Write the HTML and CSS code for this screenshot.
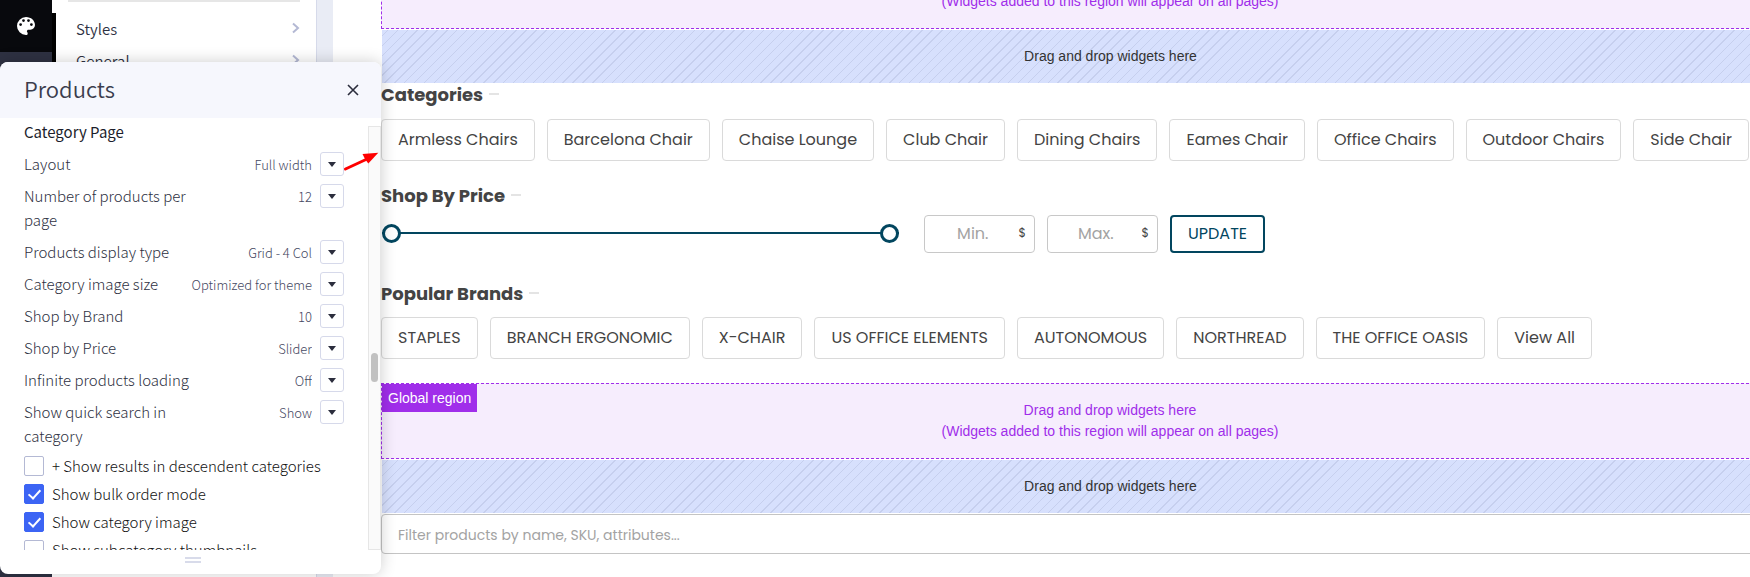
FILE: index.html
```html
<!DOCTYPE html>
<html lang="en">
<head>
<meta charset="utf-8">
<title>Theme editor</title>
<link rel="stylesheet" href="styles.css">
</head>
<body>
<div class="editor">
  <nav class="rail" aria-label="Editor">
    <button class="rail-button" aria-label="Theme">
      <svg width="18" height="18" viewBox="0 0 18 18"><path fill="#fff" fill-rule="evenodd" d="M9 0a9 9 0 0 0 0 18c1 0 1.700-.7 1.700-1.600 0-.5-.2-.8-.4-1.100-.3-.3-.4-.6-.4-1 0-.9.700-1.600 1.600-1.600H13.400c2.600 0 4.600-2 4.600-4.700C18 3.600 14 0 9 0zM3.600 9a1.400 1.400 0 1 1 0-2.800 1.400 1.400 0 0 1 0 2.800zM6.500 5a1.400 1.400 0 1 1 0-2.800 1.400 1.400 0 0 1 0 2.800zM11.500 5a1.400 1.400 0 1 1 0-2.800 1.400 1.400 0 0 1 0 2.800zM14.400 9a1.400 1.400 0 1 1 0-2.800 1.400 1.400 0 0 1 0 2.800z"/></svg>
    </button>
  </nav>
  <aside class="settings">
    <div class="settings-card"></div>
    <a class="settings-link" href="#">Styles<svg width="8" height="12" viewBox="0 0 8 12"><path d="M1 1.500 6 6 1 10.500" fill="none" stroke="#b4b9d4" stroke-width="2"/></svg></a>
    <a class="settings-link" href="#">General<svg width="8" height="12" viewBox="0 0 8 12"><path d="M1 1.500 6 6 1 10.500" fill="none" stroke="#b4b9d4" stroke-width="2"/></svg></a>
  </aside>
  <main class="preview">
    <div class="canvas">
      <div class="region region-scrolled">Drag and drop widgets here<br>(Widgets added to this region will appear on all pages)</div>
      <div class="dropzone">Drag and drop widgets here</div>
      <section class="block">
        <h2>Categories</h2>
        <div class="chips">
          <a href="#">Armless Chairs</a><a href="#">Barcelona Chair</a><a href="#">Chaise Lounge</a><a href="#">Club Chair</a><a href="#">Dining Chairs</a><a href="#">Eames Chair</a><a href="#">Office Chairs</a><a href="#">Outdoor Chairs</a><a href="#">Side Chair</a>
        </div>
      </section>
      <section class="block block-price">
        <h2>Shop By Price</h2>
        <form class="price">
          <div class="slider">
            <input type="range" min="0" max="100" value="0" aria-label="Minimum price">
            <input type="range" min="0" max="100" value="100" aria-label="Maximum price">
          </div>
          <label class="amount"><input type="text" placeholder="Min." aria-label="Min."><span>$</span></label>
          <label class="amount"><input type="text" placeholder="Max." aria-label="Max."><span>$</span></label>
          <button class="update" type="button">UPDATE</button>
        </form>
      </section>
      <section class="block block-brands">
        <h2>Popular Brands</h2>
        <div class="chips chips-brands">
          <a href="#">STAPLES</a><a href="#">BRANCH ERGONOMIC</a><a href="#">X-CHAIR</a><a href="#">US OFFICE ELEMENTS</a><a href="#">AUTONOMOUS</a><a href="#">NORTHREAD</a><a href="#">THE OFFICE OASIS</a><a href="#">View All</a>
        </div>
      </section>
      <div class="region"><span class="region-tag">Global region</span>Drag and drop widgets here<br>(Widgets added to this region will appear on all pages)</div>
      <div class="dropzone">Drag and drop widgets here</div>
      <input class="filter" type="search" placeholder="Filter products by name, SKU, attributes..." aria-label="Filter products">
    </div>
  </main>

  <section class="panel" aria-label="Products">
    <header class="panel-head">
      <h1>Products</h1>
      <button aria-label="Close"><svg width="12" height="12" viewBox="0 0 12 12"><path d="M1 1 11 11M11 1 1 11" stroke="#2b2d3d" stroke-width="1.600"/></svg></button>
    </header>
    <div class="panel-body">
      <div class="options">
        <h3>Category Page</h3>
        <div class="option"><label for="o1">Layout</label><span class="picker"><select id="o1"><option>Full width</option></select></span></div>
        <div class="option"><label for="o2">Number of products per page</label><span class="picker"><select id="o2"><option>12</option></select></span></div>
        <div class="option"><label for="o3">Products display type</label><span class="picker"><select id="o3"><option>Grid - 4 Col</option></select></span></div>
        <div class="option"><label for="o4">Category image size</label><span class="picker"><select id="o4"><option>Optimized for theme</option></select></span></div>
        <div class="option"><label for="o5">Shop by Brand</label><span class="picker"><select id="o5"><option>10</option></select></span></div>
        <div class="option"><label for="o6">Shop by Price</label><span class="picker"><select id="o6"><option>Slider</option></select></span></div>
        <div class="option"><label for="o7">Infinite products loading</label><span class="picker"><select id="o7"><option>Off</option></select></span></div>
        <div class="option"><label for="o8">Show quick search in category</label><span class="picker"><select id="o8"><option>Show</option></select></span></div>
        <div class="checks">
          <label><input type="checkbox">+ Show results in descendent categories</label>
          <label><input type="checkbox" checked>Show bulk order mode</label>
          <label><input type="checkbox" checked>Show category image</label>
          <label><input type="checkbox">Show subcategory thumbnails</label>
        </div>
      </div>
      <div class="track"><div class="thumb"></div></div>
    </div>
    <footer class="panel-foot"><span class="grip"></span></footer>
  </section>
  <svg class="pointer" width="36" height="20" viewBox="0 0 36 20"><path d="M2.500 17 23 7.500" stroke="#fe0000" stroke-width="3" stroke-linecap="round"/><path d="M35.300 .8 19.500 2 22 7 25.300 11.500z" fill="#fe0000"/></svg>
</div>
</body>
</html>
```

FILE: styles.css
```css
*, *::before, *::after { box-sizing: border-box; }

body {
  margin: 0;
  background: #fff;
  overflow: hidden;
}

h1, h2, h3 { margin: 0; }
a { color: inherit; text-decoration: none; }
button { cursor: pointer; }

.editor {
  position: relative;
  display: flex;
  height: 100vh;
  overflow: hidden;
  font-family: "Source Sans Pro", "Noto Sans CJK SC", sans-serif;
}

/* Left rail and settings column */
.rail {
  flex: none;
  width: 52px;
  background: #2e3142;
}
.rail-button {
  display: grid;
  place-items: center;
  width: 100%;
  height: 52px;
  padding: 0;
  border: 0;
  background: #08090d;
}
.settings {
  flex: none;
  width: 281px;
  padding: 0 17px 0 16px;
  border-right: 16px solid #e9ecf5;
  background: #fff linear-gradient(#000, #000) 0 13px / 4px 50px no-repeat;
  box-shadow: inset -1px 0 #d6daea;
}
.settings-card {
  height: 2px;
  margin-bottom: 10px;
  border-bottom: 2px solid #e6e6e6;
}
.settings-link {
  display: flex;
  align-items: center;
  justify-content: space-between;
  height: 32px;
  padding: 0 0 0 8px;
  font-size: 15px;
  font-weight: 350;
  color: #2e3142;
}

/* Store preview */
.preview {
  flex: 1;
  min-width: 0;
  padding-left: 48px;
  overflow: hidden;
  font-family: Poppins, Inter, sans-serif;
  color: #444;
}
.canvas {
  width: calc(100% + 89px);
}
.region {
  position: relative;
  padding: 16px;
  border: 1px dashed #a02eea;
  background: #f6edfd;
  font: 14px/21px "Liberation Sans", Arial, sans-serif;
  text-align: center;
  color: #a02eea;
}
.region-scrolled { margin-top: -47px; }
.region-tag {
  position: absolute;
  top: 0;
  left: 0;
  padding: 4px 6px 3px;
  background: #a02eea;
  color: #fff;
}
.dropzone {
  margin: 1px 0 0 1px;
  padding: 16px;
  background: repeating-linear-gradient(-45deg, #d7e0fd 0 6px, #c6cfee 6px 7px);
  font: 14px/21px "Liberation Sans", Arial, sans-serif;
  text-align: center;
  color: #333;
}
.block { padding: 0 0 20px; }
.block h2 {
  display: flex;
  align-items: center;
  gap: 6px;
  height: 22px;
  margin-bottom: 14px;
  font-size: 18px;
  font-weight: 700;
}
.block h2::after {
  content: "";
  width: 10px;
  height: 2px;
  background: #e4e4e4;
}
.chips {
  display: flex;
  gap: 12px;
  width: calc(100% - 90px);
}
.chips a {
  flex: 1 1 auto;
  height: 42px;
  padding: 0 14px;
  border: 1px solid #dadada;
  border-radius: 4px;
  font-size: 16px;
  line-height: 40px;
  text-align: center;
  white-space: nowrap;
}
.chips-brands { max-width: 1211px; }
.block-price { padding: 3px 0 29px; }
.block-price h2 { margin-bottom: 9px; }
.block-brands { padding-bottom: 24px; }
.block-brands h2 { margin-bottom: 13px; }

.price {
  display: flex;
  align-items: center;
  gap: 12px;
}
.slider {
  display: grid;
  width: 517px;
  margin: 0 13px 2px 1px;
  background: linear-gradient(#02465f, #02465f) center / 100% 2px no-repeat;
}
.slider input {
  grid-area: 1 / 1;
  width: 100%;
  height: 20px;
  margin: 0;
  appearance: none;
  background: none;
  pointer-events: none;
}
.slider input::-webkit-slider-thumb {
  appearance: none;
  width: 19px;
  height: 19px;
  border: 3px solid #02465f;
  border-radius: 50%;
  background: #fff;
  pointer-events: auto;
}
.amount {
  display: flex;
  align-items: center;
  width: 111px;
  height: 38px;
  padding: 0 8px 2px 2px;
  border: 1px solid #c8c8c8;
  border-radius: 4px;
}
.amount input {
  flex: 1;
  min-width: 0;
  padding: 0;
  border: 0;
  background: none;
  font: 16px Poppins, Inter, sans-serif;
  text-align: center;
}
.amount span { font-size: 12px; }
::placeholder { color: #a3a3a3; opacity: 1; }
.update {
  width: 95px;
  height: 38px;
  padding: 0 0 2px;
  border: 2px solid #02465f;
  border-radius: 4px;
  background: #fff;
  font: 16px Poppins, Inter, sans-serif;
  color: #02465f;
}
.filter {
  display: block;
  width: 100%;
  height: 40px;
  margin-top: 1px;
  padding: 2px 16px 0;
  border: 1px solid #c4c4c4;
  border-radius: 4px;
  font: 14px Poppins, Inter, sans-serif;
}

/* Floating options panel */
.panel {
  position: absolute;
  top: 62px;
  bottom: 3px;
  left: 0;
  display: flex;
  flex-direction: column;
  width: 381px;
  border-radius: 8px;
  overflow: hidden;
  background: #fff;
  box-shadow: 0 0 16px rgba(0, 0, 0, .2);
}
.panel-head {
  display: flex;
  flex: none;
  align-items: center;
  justify-content: space-between;
  height: 56px;
  padding: 0 16px 0 24px;
  background: #f6f7fd;
}
.panel-head h1 {
  font-size: 22px;
  font-weight: 350;
  line-height: 28px;
  padding-bottom: 4px;
  color: #3b3d4d;
}
.panel-head button {
  display: grid;
  place-items: center;
  width: 24px;
  height: 24px;
  padding: 0;
  border: 0;
  background: none;
}
.panel-body {
  display: flex;
  flex: 1;
  min-height: 0;
}
.options {
  flex: 1;
  min-width: 0;
  padding: 2px 24px 0;
  overflow: hidden;
  font-size: 15px;
  font-weight: 300;
  line-height: 24px;
  color: #2e3142;
}
.options h3 {
  height: 28px;
  font-size: 15px;
  font-weight: 400;
  color: #1c1e2b;
}
.option {
  display: flex;
  padding: 4px 0;
}
.option label {
  max-width: 168px;
}
.picker {
  position: relative;
  flex: 1;
  height: 24px;
}
.picker::before {
  content: "";
  position: absolute;
  right: 0;
  width: 24px;
  height: 24px;
  border: 1px solid #d6d9ea;
  border-radius: 3px;
}
.picker::after {
  content: "";
  position: absolute;
  top: 10px;
  right: 8px;
  border: 4px solid transparent;
  border-top: 5px solid #2b2d3d;
  border-bottom: 0;
}
.picker select {
  width: 100%;
  height: 24px;
  padding: 0 32px 0 0;
  border: 0;
  appearance: none;
  background: none;
  font: 300 13px/24px "Source Sans Pro", "Noto Sans CJK SC", sans-serif;
  text-align: right;
  text-align-last: right;
  color: #454862;
}
.checks {
  display: grid;
  gap: 4px;
  padding-top: 2px;
  color: #111;
}
.checks label {
  display: flex;
  align-items: center;
  gap: 8px;
  white-space: nowrap;
}
.checks input {
  flex: none;
  display: grid;
  place-items: center;
  width: 20px;
  height: 20px;
  margin: 0;
  border: 1px solid #b4b9d4;
  border-radius: 2px;
  appearance: none;
}
.checks input:checked {
  border-color: #3c64f4;
  background: #3c64f4;
}
.checks input:checked::after {
  content: "";
  width: 7px;
  height: 12px;
  margin-bottom: 3px;
  border: solid #fff;
  border-width: 0 2px 2px 0;
  transform: rotate(42deg);
}
.track {
  flex: none;
  width: 13px;
  margin-top: 8px;
  padding: 226px 2px 0;
  border: 1px solid #e6e6e6;
  background: #fafafa;
}
.thumb {
  height: 29px;
  border-radius: 4px;
  background: #c1c1c1;
}
.panel-foot {
  display: grid;
  flex: none;
  justify-content: center;
  height: 24px;
  padding: 7px 0 0 5px;
}
.grip {
  width: 16px;
  height: 6px;
  border: solid #d8dbea;
  border-width: 2px 0;
}
.pointer {
  position: absolute;
  top: 152px;
  left: 343px;
}
```
